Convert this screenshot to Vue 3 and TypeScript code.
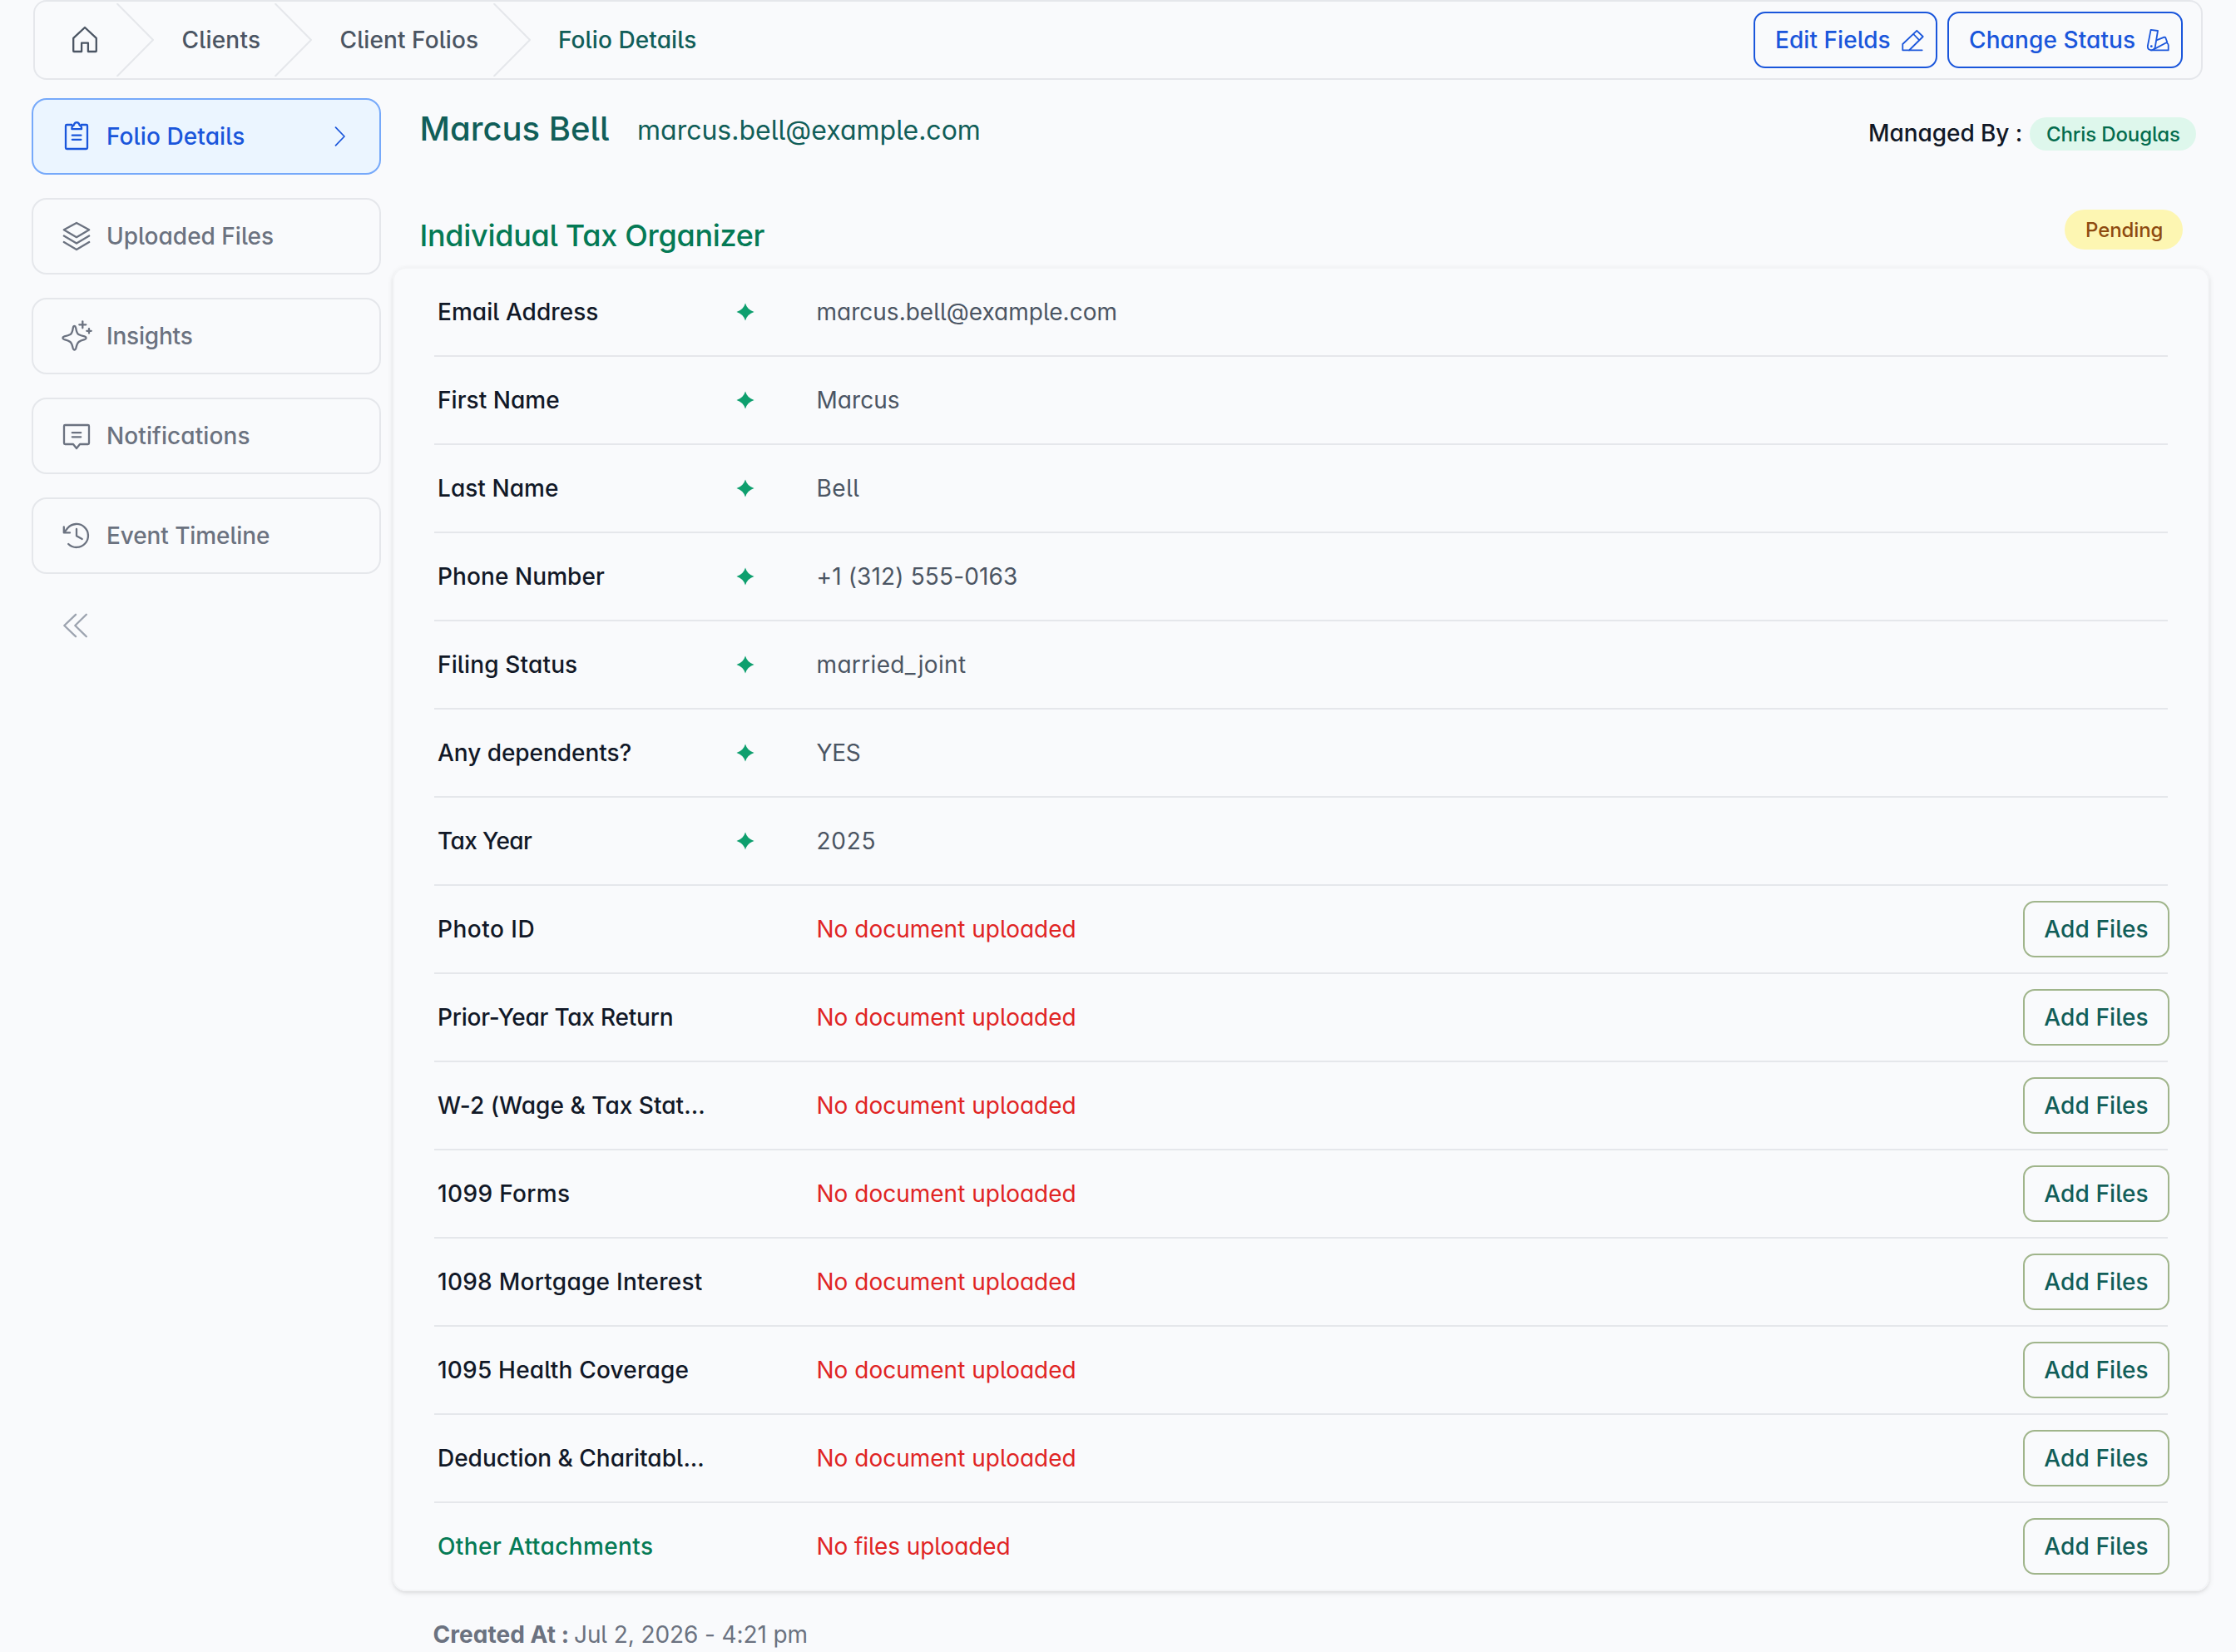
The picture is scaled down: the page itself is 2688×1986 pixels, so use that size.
<script setup lang="ts">
interface Text {
  text: string
  /** letter spacing in px */
  track: number
}

interface NavItem extends Text {
  icon: string[]
  active?: boolean
}

interface Row {
  label: Text
  value: Text
  kind: 'field' | 'document' | 'other'
}

const crumbs: (Text & { width: number; current?: boolean })[] = [
  { text: 'Clients', track: 0.2, width: 190 },
  { text: 'Client Folios', track: 0.1, width: 263 },
  { text: 'Folio Details', track: 0.1, width: 240, current: true },
]

const navItems: NavItem[] = [
  {
    text: 'Folio Details',
    track: 0.1,
    active: true,
    icon: [
      'M14.3 6H8.2Q7 6 7 7.2V33.8Q7 35 8.2 35H31.8Q33 35 33 33.8V7.2Q33 6 31.8 6H25.9',
      'M14.4 11.2V9.4Q14.4 7.6 16.6 6.6Q17.6 3.2 20.2 3.2T23.8 6.6Q26 7.6 26 9.4V11.2Z',
      'M14.8 18.7H25.4M14.8 23.8H25.4',
    ],
  },
  {
    text: 'Uploaded Files',
    track: 0,
    icon: [
      'M20 4L35.2 12.3L20 21.2L4.8 12.3Z',
      'M4.8 19.5L20 28.6L35.2 19.5',
      'M4.8 27L20 36L35.2 27',
    ],
  },
  {
    text: 'Insights',
    track: -0.2,
    icon: [
      'M17.5 8C18.5 8 18.9 9 19.2 10.2Q20.3 16.8 22.4 18Q24.6 19.2 29.6 20.4Q31.6 21 31.6 22.3T29.6 24.2Q24.6 25.4 22.7 27Q20.7 28.6 19.4 34.2Q18.8 36.5 17.5 36.5T15.6 34.2Q14.4 28.6 12.4 27Q10.4 25.4 5.4 24.2Q3.4 23.6 3.4 22.3T5.4 20.4Q10.4 19.2 12.6 18Q14.8 16.6 15.8 10.2Q16.2 8 17.5 8Z',
      'M27.3 2.3V10.3M23.3 6.3H31.3',
      'M35 11.1V16.5M32.3 13.8H37.7',
    ],
  },
  {
    text: 'Notifications',
    track: 0.1,
    icon: [
      'M5 8.2Q5 7 6.2 7H33.8Q35 7 35 8.2V28.8Q35 30 33.8 30H24L20 35L16 30H6.2Q5 30 5 28.8Z',
      'M14.8 16.2H25.2M14.8 21.3H25.2',
    ],
  },
  {
    text: 'Event Timeline',
    track: -0.1,
    icon: [
      'M4.8 9.4V16.4H12',
      'M5.4 15.8L9.4 10.8A14 14 0 1 1 10.2 30',
      'M20 12V20.3L26.7 24',
    ],
  },
]

const none: Text = { text: 'No document uploaded', track: 0 }

const rows: Row[] = [
  { kind: 'field', label: { text: 'Email Address', track: 0.05 }, value: { text: 'marcus.bell@example.com', track: 0.01 } },
  { kind: 'field', label: { text: 'First Name', track: 0.05 }, value: { text: 'Marcus', track: 0.05 } },
  { kind: 'field', label: { text: 'Last Name', track: 0.05 }, value: { text: 'Bell', track: 0.5 } },
  { kind: 'field', label: { text: 'Phone Number', track: 0.08 }, value: { text: '+1 (312) 555-0163', track: 0.15 } },
  { kind: 'field', label: { text: 'Filing Status', track: 0.15 }, value: { text: 'married_joint', track: 0.35 } },
  { kind: 'field', label: { text: 'Any dependents?', track: -0.04 }, value: { text: 'YES', track: -0.3 } },
  { kind: 'field', label: { text: 'Tax Year', track: -0.6 }, value: { text: '2025', track: 0.7 } },
  { kind: 'document', label: { text: 'Photo ID', track: 0.5 }, value: none },
  { kind: 'document', label: { text: 'Prior-Year Tax Return', track: -0.22 }, value: none },
  { kind: 'document', label: { text: 'W-2 (Wage & Tax Stat...', track: 0.03 }, value: none },
  { kind: 'document', label: { text: '1099 Forms', track: 0.35 }, value: none },
  { kind: 'document', label: { text: '1098 Mortgage Interest', track: 0.26 }, value: none },
  { kind: 'document', label: { text: '1095 Health Coverage', track: 0.2 }, value: none },
  { kind: 'document', label: { text: 'Deduction & Charitabl...', track: -0.02 }, value: none },
  { kind: 'other', label: { text: 'Other Attachments', track: 0.4 }, value: { text: 'No files uploaded', track: -0.1 } },
]

const tracking = (t: Text) => ({ letterSpacing: `${t.track}px` })
</script>

<template>
  <div class="page">
    <header class="topbar">
      <nav class="crumbs">
        <a class="home">
          <svg class="home-icon" viewBox="0 0 36 36">
            <path d="M18 3L31.8 15.8V31.3Q31.8 32 31.1 32H21.9V21.6H14.1V32H4.9Q4.2 32 4.2 31.3V15.8Z" />
          </svg>
        </a>
        <template v-for="crumb in crumbs" :key="crumb.text">
          <svg class="separator" viewBox="0 0 46 88"><path d="M0.5 0L44 44L0.5 88" /></svg>
          <a
            class="crumb"
            :class="{ current: crumb.current }"
            :style="{ ...tracking(crumb), width: `${crumb.width - 46}px` }"
          >{{ crumb.text }}</a>
        </template>
      </nav>
      <div class="actions">
        <button class="action edit">
          <span>Edit Fields</span>
          <svg viewBox="0 0 30 30">
            <path d="M3.3 27.3V20L20.3 3.8L27.7 11L11 27.5M3.3 27.3H26.7M16.3 8L23.3 15.3" />
          </svg>
        </button>
        <button class="action status">
          <span>Change Status</span>
          <svg viewBox="0 0 30 30">
            <path d="M6.6 2.9L15 4L11.8 23.5Q10.8 27.4 7 27.4Q2.6 26.6 2.8 22.5Z" />
            <path d="M14 15.2L22.8 11.6Q23.8 11.4 24.3 12.3L26.3 17.8L9.5 26.6" />
            <path d="M26.3 19Q27.6 19.6 27.7 21.3V27.4H7" />
            <circle cx="7.3" cy="22.7" r="1.4" />
          </svg>
        </button>
      </div>
    </header>

    <div class="body">
      <aside class="sidebar">
        <a v-for="item in navItems" :key="item.text" class="nav-item" :class="{ active: item.active }">
          <svg class="nav-icon" viewBox="0 0 40 40">
            <path v-for="d in item.icon" :key="d" :d="d" />
          </svg>
          <span class="nav-label" :style="tracking(item)">{{ item.text }}</span>
          <svg v-if="item.active" class="nav-arrow" viewBox="0 0 14 24">
            <path d="M1.5 1.2L12 12L1.5 22.8" />
          </svg>
        </a>
        <svg class="collapse" viewBox="0 0 32 32">
          <path d="M17 2.8L3.3 16L17 29.2M29.8 2.8L16.3 16L29.8 29.2" />
        </svg>
      </aside>

      <main class="main">
        <div class="client">
          <h1 class="client-name">Marcus Bell</h1>
          <span class="client-email">marcus.bell@example.com</span>
          <span class="managed">Managed By :</span>
          <span class="manager">Chris Douglas</span>
        </div>
        <div class="folio">
          <h2 class="folio-name">Individual Tax Organizer</h2>
          <span class="pending">Pending</span>
        </div>
        <section class="card">
          <div v-for="row in rows" :key="row.label.text" class="row" :class="row.kind">
            <span class="label" :style="tracking(row.label)">{{ row.label.text }}</span>
            <span class="marker">
              <svg v-if="row.kind === 'field'" viewBox="0 0 22 22">
                <path d="M11 0.5Q13.2 8.3 21.5 11Q13.2 13.7 11 21.5Q8.8 13.7 0.5 11Q8.8 8.3 11 0.5Z" />
              </svg>
            </span>
            <span class="value" :style="tracking(row.value)">{{ row.value.text }}</span>
            <button v-if="row.kind !== 'field'" class="add">Add Files</button>
          </div>
        </section>
        <p class="created"><b>Created At :</b><span>Jul 2, 2026 - 4:21 pm</span></p>
      </main>
    </div>
  </div>
</template>

<style>
body {
  background: #f9fafc;
}
</style>

<style scoped>
.page {
  width: 2688px;
  height: 1986px;
  overflow: hidden;
  background: #f9fafc;
  font-family: Inter, "Liberation Sans", sans-serif;
  font-feature-settings: "cv11", "cv05";
  font-size: 28px;
  font-weight: 500;
  line-height: 40px;
  white-space: nowrap;
}

.page * {
  box-sizing: border-box;
}

svg {
  display: block;
  flex: none;
  fill: none;
  stroke: currentColor;
  stroke-width: 2.3;
  stroke-linecap: round;
  stroke-linejoin: round;
}

button {
  font: inherit;
  font-feature-settings: inherit;
  background: none;
}

.topbar {
  display: flex;
  justify-content: space-between;
  align-items: center;
  width: 2608px;
  height: 96px;
  margin-left: 40px;
  padding-right: 22px;
  border: 2px solid #e5e7eb;
  border-radius: 16px;
}

.crumbs {
  display: flex;
  align-items: center;
  color: #4b5563;
}

.home {
  width: 98px;
  padding-left: 42px;
}

.home-icon {
  width: 36px;
  height: 36px;
  stroke-width: 2.3;
}

.separator {
  width: 46px;
  height: 88px;
  color: #e5e7eb;
  stroke-width: 2;
  stroke-linecap: butt;
}

.crumb {
  padding-left: 32.5px;
}

.crumb.current {
  padding-left: 32px;
  color: #115e59;
}

.actions {
  display: flex;
  gap: 12px;
}

.action {
  display: flex;
  justify-content: space-between;
  align-items: center;
  height: 68px;
  padding: 0 13px 0 24px;
  border: 2px solid #1a56db;
  border-radius: 14px;
  color: #1a56db;
}

.action svg {
  width: 30px;
  height: 30px;
  stroke-width: 1.8;
}

.action circle {
  fill: currentColor;
  stroke: none;
}

.edit {
  width: 221px;
  letter-spacing: 0.05px;
}

.status {
  width: 283px;
  letter-spacing: 0.1px;
}

.body {
  display: flex;
  gap: 14px;
  padding: 22px 0 0 38px;
}

.sidebar {
  display: flex;
  flex-direction: column;
  gap: 28px;
  width: 420px;
}

.nav-item {
  display: flex;
  align-items: center;
  height: 92px;
  padding: 0 40px 0 32px;
  border: 2px solid #e5e7eb;
  border-radius: 18px;
  color: #6b7280;
}

.nav-item.active {
  background: #ebf5ff;
  border-color: #76a9fa;
  color: #1a56db;
}

.nav-icon {
  width: 40px;
  height: 40px;
}

.nav-label {
  flex: 1;
  margin-left: 16px;
}

.nav-arrow {
  width: 14px;
  height: 24px;
  stroke-width: 1.7;
}

.collapse {
  width: 32px;
  height: 32px;
  margin: 18px 0 0 36px;
  color: #9ca3af;
}

.main {
  width: 2184px;
}

.client {
  display: flex;
  align-items: flex-start;
  height: 74px;
  padding: 0 16px 0 32.5px;
}

.client-name {
  width: 261.5px;
  margin: 0;
  font-size: 40px;
  font-weight: 550;
  line-height: 74px;
  letter-spacing: 0;
  color: #115e59;
}

.client-email {
  font-size: 32px;
  font-weight: 400;
  line-height: 78px;
  letter-spacing: 0;
  color: #115e59;
}

.managed {
  width: 194px;
  margin-left: auto;
  line-height: 84px;
  letter-spacing: -0.07px;
  color: #111827;
}

.manager {
  width: 200px;
  height: 40px;
  margin-top: 23px;
  padding-left: 20px;
  border-radius: 20px;
  background: #def7ec;
  color: #046c4e;
  font-size: 24px;
  line-height: 41px;
  letter-spacing: -0.12px;
}

.folio {
  display: flex;
  justify-content: space-between;
  height: 129px;
  padding: 60px 32px 0 32.5px;
}

.folio-name {
  margin: 0;
  font-size: 36px;
  font-weight: 500;
  line-height: 62px;
  letter-spacing: -0.3px;
  color: #057a55;
}

.pending {
  width: 142px;
  height: 48px;
  padding-left: 25px;
  border-radius: 24px;
  background: #fdf6b2;
  color: #8e4b10;
  font-size: 24px;
  line-height: 50px;
  letter-spacing: -0.1px;
}

.card {
  padding: 0 48px;
  border: 2px solid #f3f4f6;
  border-radius: 16px;
  box-shadow: 0 2px 6px rgba(0, 0, 0, 0.1), 0 2px 4px -2px rgba(0, 0, 0, 0.1);
}

.row {
  display: flex;
  align-items: center;
  height: 106px;
  border-bottom: 2px solid #e5e7eb;
}

.row:last-child {
  height: 104px;
  border-bottom: none;
}

.label {
  width: 363px;
  padding-left: 4px;
  color: #111827;
}

.other .label {
  color: #057a55;
}

.marker {
  width: 94px;
}

.marker svg {
  width: 22px;
  height: 22px;
  fill: #0e9f6e;
  stroke: none;
}

.value {
  flex: 1;
  padding-left: 2.5px;
  font-weight: 400;
  color: #4b5563;
}

.document .value,
.other .value {
  color: #e02424;
}

.add {
  width: 176px;
  height: 68px;
  margin-right: -2px;
  padding: 0;
  border: 2px solid #a0b58b;
  border-radius: 14px;
  color: #115e59;
  letter-spacing: 0.1px;
}

.created {
  display: flex;
  margin: 32px 0 0 48.5px;
  font-weight: 400;
  color: #6b7280;
}

.created b {
  width: 169.5px;
  font-weight: 700;
  letter-spacing: 0.05px;
}

.created span {
  letter-spacing: -0.1px;
}
</style>
